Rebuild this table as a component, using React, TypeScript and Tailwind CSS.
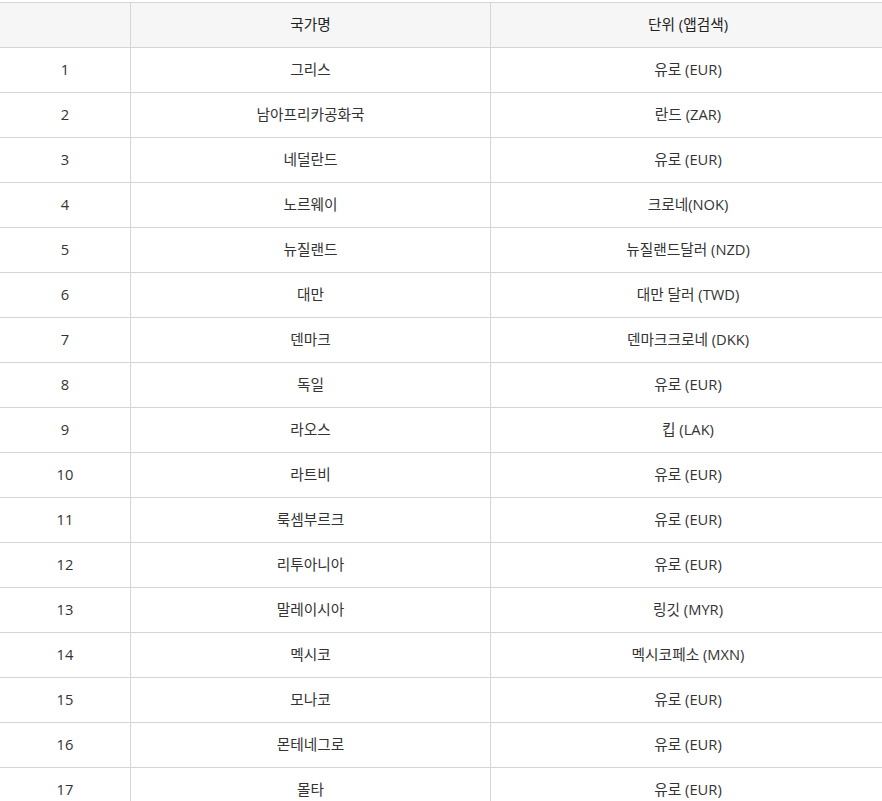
const rows: [string, string][] = [
  ['그리스', '유로 (EUR)'],
  ['남아프리카공화국', '란드 (ZAR)'],
  ['네덜란드', '유로 (EUR)'],
  ['노르웨이', '크로네(NOK)'],
  ['뉴질랜드', '뉴질랜드달러 (NZD)'],
  ['대만', '대만 달러 (TWD)'],
  ['덴마크', '덴마크크로네 (DKK)'],
  ['독일', '유로 (EUR)'],
  ['라오스', '킵 (LAK)'],
  ['라트비', '유로 (EUR)'],
  ['룩셈부르크', '유로 (EUR)'],
  ['리투아니아', '유로 (EUR)'],
  ['말레이시아', '링깃 (MYR)'],
  ['멕시코', '멕시코페소 (MXN)'],
  ['모나코', '유로 (EUR)'],
  ['몬테네그로', '유로 (EUR)'],
  ['몰타', '유로 (EUR)'],
];

function Row({ cells, head }: { cells: string[]; head?: boolean }) {
  return (
    <div
      className={`grid h-[45px] grid-cols-[131px_360px_1fr] border-b border-[#d5d5d5] ${
        head ? 'bg-[#f6f6f6] text-[#222]' : 'bg-white text-[#333]'
      }`}
    >
      {cells.map((c, i) => (
        <div
          key={i}
          className={`flex items-center justify-center pb-[2px] ${i < 2 ? 'border-r border-[#d5d5d5]' : ''}`}
        >
          {c}
        </div>
      ))}
    </div>
  );
}

export default function App() {
  return (
    <div className="h-[801px] overflow-hidden bg-white pt-[2px] font-['Open_Sans','Noto_Sans_CJK_KR',sans-serif] text-[14.7px]">
      <div className="w-[885px] border-t border-[#d5d5d5]">
        <Row head cells={['', '국가명', '단위 (앱검색)']} />
        {rows.map(([name, unit], i) => (
          <Row key={i} cells={[String(i + 1), name, unit]} />
        ))}
      </div>
    </div>
  );
}
